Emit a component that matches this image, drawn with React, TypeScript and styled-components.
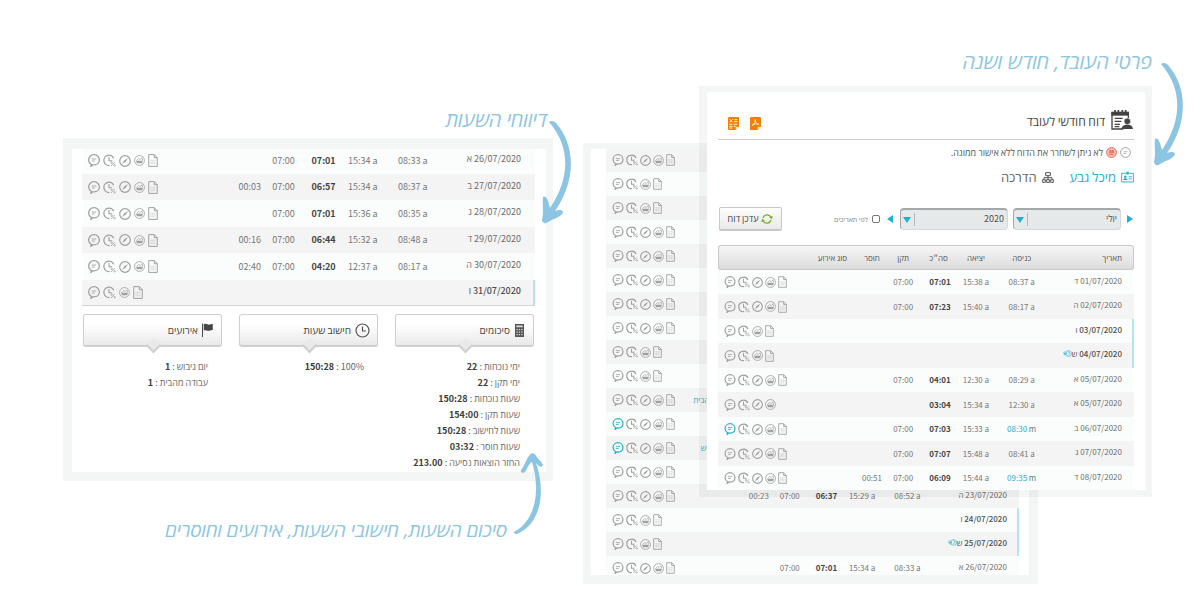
import React from "react";
import styled, { createGlobalStyle, css } from "styled-components";

const GlobalStyle = createGlobalStyle`
  * { box-sizing: border-box; }
  body {
    margin: 0;
    background: #fff;
    color: #666;
    font-family: "Noto Sans CJK JP", "Open Sans", sans-serif;
  }
`;

const CYAN = "#1fb0cf";
const SKY = "#8cc5e1";

/* ---------- page frame ---------- */

const Page = styled.main`
  display: grid;
  grid-template-columns: 490fr 569fr;
  column-gap: 30px;
  min-height: 600px;
  padding: 0 48px 0 63px;
  overflow: hidden;
`;

const Column = styled.section<{ $top: number }>`
  position: relative;
  min-width: 0;
  padding-top: ${(p) => p.$top}px;
`;

const Caption = styled.h2<{ $size?: number; $end?: number; $before?: number; $after?: number }>`
  margin: ${(p) => p.$before ?? 0}px ${(p) => p.$end ?? 0}px ${(p) => p.$after ?? 0}px 0;
  color: ${SKY};
  font: italic 400 ${(p) => p.$size ?? 20}px/24px "Open Sans", "DejaVu Sans", sans-serif;
  white-space: nowrap;
`;

const ArrowDown = styled.svg<{ $top: number; $right: number }>`
  position: absolute;
  z-index: 3;
  top: ${(p) => p.$top}px;
  right: ${(p) => p.$right}px;
  width: 32px;
  height: 108px;
`;

const ArrowUp = styled.svg`
  position: absolute;
  z-index: 3;
  top: 450px;
  right: 8px;
  width: 32px;
  height: 88px;
`;

const Stack = styled.div`
  display: grid;
  > * { grid-area: 1 / 1; }
`;

const panel = css`
  min-width: 0;
  border-style: solid;
  border-color: rgba(0, 40, 30, 0.043);
  background: #fff;
  background-clip: padding-box;
  overflow: hidden;
`;

const HoursPanel = styled.article`
  ${panel}
  border-width: 11px 7px 9px 9px;
  height: 343px;
  padding: 0 11px 0 10px;
`;

const BackPanel = styled.article`
  ${panel}
  align-self: start;
  height: 441px;
  margin: 57px 114px 0 0;
  border-width: 6px 9px 9px 8px;
  padding: 0 10px 0 15px;
`;

const FrontPanel = styled.article`
  ${panel}
  z-index: 1;
  align-self: start;
  margin-left: 116px;
  border-width: 6px 7px 7px 8px;
  padding: 0 11px;
`;

/* ---------- report table ---------- */

const Table = styled.table<{ $size: number; $pull?: number }>`
  width: 100%;
  margin-top: -${(p) => p.$pull ?? 0}px;
  border-collapse: separate;
  border-spacing: 0;
  table-layout: fixed;
  font-size: ${(p) => p.$size}px;
  line-height: 12px;
`;

const Col = styled.col<{ $w: number }>`
  width: ${(p) => p.$w}%;
`;

const HeadCell = styled.th<{ $place?: "first" | "last" }>`
  height: 25px;
  padding: 0;
  border: solid #c9c9c9;
  border-width: 1px 0;
  background: linear-gradient(#f6f6f6, #dcdcdc);
  color: #555;
  font-weight: 400;
  text-align: center;
  white-space: nowrap;
  ${(p) => p.$place === "first" && css`
    border-right-width: 1px;
    border-radius: 0 3px 3px 0;
    padding-right: 11px;
    text-align: right;
  `}
  ${(p) => p.$place === "last" && css`
    border-left-width: 1px;
    border-radius: 3px 0 0 3px;
  `}
`;

const Row = styled.tr<{ $h: number; $shade: boolean; $line?: boolean }>`
  height: ${(p) => p.$h}px;
  background: ${(p) => (p.$shade ? "#f4f4f4" : "#fbfdfd")};
  ${(p) => p.$line && css`
    td { border-bottom: 1px solid #d4d4d4; }
  `}
`;

const Cell = styled.td`
  padding: 0;
  text-align: center;
  white-space: nowrap;
  color: #777;
`;

const TotalCell = styled(Cell)`
  padding-left: 3px;
  color: #444;
  font-weight: 700;
`;

const EventCell = styled(Cell)`
  padding-right: 10px;
  color: ${CYAN};
`;

const DateCell = styled.td<{ $off?: boolean; $large?: boolean }>`
  padding: 0 ${(p) => (p.$large ? 14 : 12)}px 3px 0;
  text-align: right;
  white-space: nowrap;
  color: ${(p) => (p.$off ? "#4c4c4c" : "#6c6c6c")};
  box-shadow: ${(p) => (p.$off ? "inset -2px 0 0 #b2e5ee" : "none")};
  font-weight: ${(p) => (p.$off ? 500 : 400)};
`;

const IconCell = styled.td`
  padding: 0 0 0 6px;
  overflow: hidden;
`;

const Icons = styled.div<{ $gap: number }>`
  display: flex;
  direction: ltr;
  align-items: center;
  gap: ${(p) => p.$gap}px;
  color: #a0a0a0;
  svg { display: block; flex: none; }
`;

const Accent = styled.span`
  color: ${CYAN};
`;

/* ---------- row icons ---------- */

type Glyph = { w: number; h: number };

const Bubble = ({ w, h, on }: Glyph & { on?: boolean }) => (
  <svg width={w} height={h} viewBox="0 0 24 26" fill="none" stroke={on ? CYAN : "currentColor"} strokeWidth="2.6">
    <path d="M6.4 20.6C3.200 18.800 1.300 15.600 1.300 12 1.300 6 6 1.400 12 1.400S22.700 6 22.700 12 18 21.800 12 21.800c-1 0-2 0-2.800-.3L5.800 25z" />
    <path d="M7.500 10h9M7.500 14h6" strokeWidth="1.800" />
  </svg>
);

const ClockPercent = ({ w, h }: Glyph) => (
  <svg width={w} height={h} viewBox="0 0 26 26" fill="none" stroke="currentColor" strokeWidth="2.6">
    <path d="M21.500 8.500A10.300 10.300 0 1 0 13 23" />
    <path d="M12 6v7.500h6.500" strokeWidth="2.200" />
    <path d="M16 24l7.500-8" strokeWidth="1.600" />
    <circle cx="17.200" cy="17.500" r="1.500" strokeWidth="1.500" />
    <circle cx="23.200" cy="22.500" r="1.500" strokeWidth="1.500" />
  </svg>
);

const Compass = ({ w, h }: Glyph) => (
  <svg width={w} height={h} viewBox="0 0 24 24" fill="none" stroke="currentColor" strokeWidth="2.400">
    <circle cx="12" cy="12" r="10.600" />
    <path d="M18 6l-5 8-3-3zM6 18l5-8 3 3z" fill="currentColor" stroke="none" />
  </svg>
);

const Basket = ({ w, h }: Glyph) => (
  <svg width={w} height={h} viewBox="0 0 24 24" fill="none" stroke="currentColor" strokeWidth="1.800">
    <circle cx="12" cy="12" r="10.800" />
    <path d="M4.500 12.500h15l-2 5.500h-11z" fill="currentColor" stroke="none" />
    <path d="M5.500 12l5-4.500 3 2.500 4-4 1.500 6" strokeWidth="1.500" />
  </svg>
);

const Doc = ({ w, h }: Glyph) => (
  <svg width={w} height={h} viewBox="0 0 20 26" fill="none" stroke="currentColor" strokeWidth="2">
    <path d="M1.500 1.200h11l6 6v17.600h-17z" />
    <path d="M12.500 1.500v6h6" />
    <path d="M5 12.500h10M5 16h10M5 19.500h10" strokeWidth="1.200" opacity=".6" />
  </svg>
);

const Moon = () => (
  <svg width="9" height="7" viewBox="0 0 27 21" fill="none" stroke={CYAN} strokeWidth="2" aria-hidden="true">
    <circle cx="17" cy="10.500" r="8.500" />
    <path d="M16 5.500c5 0 6 8 0 9M12 10.500H3c-3-4 2-6 5-4M3 10.500c-1 4 3 5 6 3.500" />
  </svg>
);

type Entry = {
  date?: string;
  day?: string;
  in?: string;
  manual?: boolean;
  out?: string;
  total?: string;
  std?: string;
  lack?: string;
  event?: string;
  set?: "full" | "off" | "nodoc";
  marked?: boolean;
};

const e = (date: string, day: string, inn = "", out = "", total = "", std = "", lack = "", more: Partial<Entry> = {}): Entry => ({
  date, day, in: inn, out, total, std, lack, ...more,
});

const OFF: Partial<Entry> = { set: "off" };

const hoursRows: Entry[] = [
  e("26/07/2020", "א", "08:33", "15:34", "07:01", "07:00"),
  e("27/07/2020", "ב", "08:37", "15:34", "06:57", "07:00", "00:03"),
  e("28/07/2020", "ג", "08:35", "15:36", "07:01", "07:00"),
  e("29/07/2020", "ד", "08:48", "15:32", "06:44", "07:00", "00:16"),
  e("30/07/2020", "ה", "08:17", "12:37", "04:20", "07:00", "02:40"),
  e("31/07/2020", "ו", "", "", "", "", "", OFF),
];

const frontRows: Entry[] = [
  e("01/07/2020", "ד", "08:37", "15:38", "07:01", "07:00"),
  e("02/07/2020", "ה", "08:17", "15:40", "07:23", "07:00"),
  e("03/07/2020", "ו", "", "", "", "", "", OFF),
  e("04/07/2020", "ש", "", "", "", "", "", OFF),
  e("05/07/2020", "א", "08:29", "12:30", "04:01", "07:00"),
  e("05/07/2020", "א", "12:30", "15:34", "03:04", "", "", { set: "nodoc" }),
  e("06/07/2020", "ב", "08:30", "15:33", "07:03", "07:00", "", { manual: true, marked: true }),
  e("07/07/2020", "ג", "08:41", "15:48", "07:07", "07:00"),
  e("08/07/2020", "ד", "09:35", "15:44", "06:09", "07:00", "00:51", { manual: true }),
];

const backRows: Entry[] = [
  {}, OFF, OFF, {}, {}, {}, {}, {}, OFF, OFF,
  { event: "עבודה מהבית" },
  { marked: true },
  { marked: true, event: "יום גיבוש" },
  {},
  e("23/07/2020", "ה", "08:52", "15:29", "06:37", "07:00", "00:23"),
  e("24/07/2020", "ו", "", "", "", "", "", OFF),
  e("25/07/2020", "ש", "", "", "", "", "", OFF),
  e("26/07/2020", "א", "08:33", "15:34", "07:01", "07:00"),
];

const RowIcons = ({ entry, large }: { entry: Entry; large?: boolean }) => {
  const h = large ? 13 : 12;
  const s = large ? 12 : 11;
  return (
    <Icons $gap={large ? 3 : 2}>
      <Bubble w={12} h={h} on={entry.marked} />
      <ClockPercent w={large ? 13 : 12} h={h} />
      {entry.set !== "off" && <Compass w={s} h={s} />}
      <Basket w={11} h={11} />
      {entry.set !== "nodoc" && <Doc w={large ? 10 : 9} h={h} />}
    </Icons>
  );
};

const WIDTHS = [21, 12, 10, 8, 9, 6, 13, 21];
const HEADS = ["תאריך", "כניסה", "יציאה", "סה״כ", "תקן", "חוסר", "סוג אירוע", ""];

type ReportProps = {
  rows: Entry[];
  heights: [number, number];
  size: number;
  head?: boolean;
  large?: boolean;
  pull?: number;
  shadeOdd?: boolean;
  lastLine?: boolean;
};

const Report = ({ rows, heights, size, head, large, pull, shadeOdd, lastLine }: ReportProps) => (
  <Table $size={size} $pull={pull} dir="rtl">
    <colgroup>
      {WIDTHS.map((w, i) => <Col key={i} $w={w} />)}
    </colgroup>
    {head && (
      <thead>
        <tr>
          {HEADS.map((h, i) => (
            <HeadCell key={i} $place={i === 0 ? "first" : i === 7 ? "last" : undefined}>{h}</HeadCell>
          ))}
        </tr>
      </thead>
    )}
    <tbody>
      {rows.map((r, i) => (
        <Row key={i} $h={heights[i % 2]} $shade={(i % 2 === 0) === !!shadeOdd} $line={lastLine && i === rows.length - 1}>
          <DateCell $large={large} $off={!!r.date && r.set === "off"}>
            {r.date} {r.day}
            {r.day === "ש" && <Moon />}
          </DateCell>
          <Cell dir="ltr">
            {r.in && (r.manual ? <><Accent>{r.in}</Accent> m</> : `${r.in} a`)}
          </Cell>
          <Cell dir="ltr">{r.out && `${r.out} a`}</Cell>
          <TotalCell>{r.total}</TotalCell>
          <Cell>{r.std}</Cell>
          <Cell>{r.lack}</Cell>
          <EventCell>{r.event}</EventCell>
          <IconCell><RowIcons entry={r} large={large} /></IconCell>
        </Row>
      ))}
    </tbody>
  </Table>
);

/* ---------- summary cards ---------- */

const Cards = styled.div`
  display: grid;
  grid-template-columns: repeat(3, 1fr);
  column-gap: 17px;
  margin-top: 8px;
  padding: 0 1px;
  direction: rtl;
`;

const CardTitle = styled.h3`
  position: relative;
  display: flex;
  align-items: center;
  gap: 4px;
  height: 33px;
  margin: 0 0 12px;
  padding: 0 7px;
  border: 1px solid #cfcfcf;
  border-bottom-width: 2px;
  border-radius: 3px;
  background: linear-gradient(#fff 30%, #e9e9e9);
  color: #444;
  font-size: 10px;
  line-height: 14px;
  font-weight: 400;
  white-space: nowrap;
  &::after {
    content: "";
    position: absolute;
    left: 50%;
    bottom: -6px;
    width: 9px;
    height: 9px;
    margin-left: -5px;
    border: solid #cfcfcf;
    border-width: 0 2px 2px 0;
    background: #e9e9e9;
    transform: rotate(45deg);
  }
`;

const Lines = styled.ul`
  margin: 0;
  padding: 0 14px 0 0;
  list-style: none;
  color: #666;
  font-size: 9px;
  line-height: 16px;
  white-space: nowrap;
  strong { color: #3c3c3c; }
`;

const CalcIcon = () => (
  <svg width="12" height="13" viewBox="0 0 24 26" fill="#555">
    <path d="M2 0h18v26H2z" />
    <path d="M4.500 3h13v3.500h-13zM5 10h2.500v2.500H5zM9.700 10h2.500v2.500H9.700zM14.500 10h2.500v2.500h-2.500zM5 15h2.500v2.500H5zM9.700 15h2.500v2.500H9.700zM14.500 15h2.500v2.500h-2.500zM5 20h2.500v2.500H5zM9.700 20h2.500v2.500H9.700zM14.500 20h2.500v2.500h-2.500z" fill="#ddd" />
  </svg>
);

const ClockIcon = () => (
  <svg width="15" height="15" viewBox="0 0 30 30" fill="none" stroke="#555" strokeWidth="2.400">
    <circle cx="15" cy="15" r="13" />
    <path d="M15 7v9h7" />
  </svg>
);

const FlagIcon = () => (
  <svg width="12" height="14" viewBox="0 0 24 28" fill="#444">
    <path d="M0 1h2v27H0zM3.500 2.500c5-3 8 2 12 .5 2-.7 4-1.500 6-1v12c-4-1-6 2-9.500 1.500-3-.5-5-2-8.500-.5z" />
  </svg>
);

const cards: { title: string; icon: React.ReactNode; lines: [string, string][] }[] = [
  {
    title: "סיכומים",
    icon: <CalcIcon />,
    lines: [
      ["ימי נוכחות", "22"],
      ["ימי תקן", "22"],
      ["שעות נוכחות", "150:28"],
      ["שעות תקן", "154:00"],
      ["שעות לחישוב", "150:28"],
      ["שעות חוסר", "03:32"],
      ["החזר הוצאות נסיעה", "213.00"],
    ],
  },
  { title: "חישוב שעות", icon: <ClockIcon />, lines: [["100%", "150:28"]] },
  { title: "אירועים", icon: <FlagIcon />, lines: [["יום גיבוש", "1"], ["עבודה מהבית", "1"]] },
];

/* ---------- report header ---------- */

const TitleBar = styled.header`
  display: flex;
  align-items: center;
  height: 48px;
  padding: 10px 1px 0 0;
  border-bottom: 1px solid #cdcdcd;
  direction: rtl;
`;

const Title = styled.h1`
  margin: 0 6px 0 auto;
  color: #444;
  font-size: 12px;
  line-height: 16px;
  font-weight: 400;
`;

const Exports = styled.div`
  display: flex;
  gap: 11px;
  margin: 5px auto 0 10px;
`;

const IconButton = styled.button`
  display: block;
  padding: 0;
  border: 0;
  background: none;
  svg { display: block; }
`;

const Notice = styled.p`
  display: flex;
  align-items: center;
  gap: 3px;
  height: 25px;
  margin: 0;
  padding-right: 3px;
  direction: rtl;
  color: #555;
  font-size: 9px;
  line-height: 12px;
  white-space: nowrap;
`;

const Person = styled.div`
  display: flex;
  align-items: center;
  gap: 5px;
  height: 24px;
  direction: rtl;
  font-size: 13px;
  line-height: 18px;
  color: #666;
`;

const PersonName = styled.a`
  margin-left: 11px;
  color: ${CYAN};
  text-decoration: none;
`;

const Filters = styled.form`
  display: flex;
  align-items: center;
  height: 24px;
  margin: 18px 0 14px;
  direction: rtl;
`;

const SelectBox = styled.div`
  position: relative;
  flex: 0 1 108px;
  min-width: 0;
  margin-left: 5px;
  &::after {
    content: "";
    position: absolute;
    left: 3px;
    top: 9px;
    border: solid transparent;
    border-width: 6px 4px 0;
    border-top-color: ${CYAN};
  }
  &::before {
    content: "";
    position: absolute;
    left: 14px;
    top: 5px;
    height: 13px;
    border-left: 1px solid #b5b9b9;
  }
`;

const Select = styled.select`
  display: block;
  width: 100%;
  height: 22px;
  padding: 0 3px 2px 18px;
  appearance: none;
  border: 1px solid #d3d8d8;
  border-top: 2px solid #a3a8a8;
  border-left-color: #a3a8a8;
  border-radius: 4px;
  background: #e5e9e9;
  color: #555;
  font: 9px/12px "Noto Sans CJK JP", "Open Sans", sans-serif;
`;

const Step = styled.button<{ $prev?: boolean }>`
  width: 0;
  height: 0;
  padding: 0;
  border: solid transparent;
  background: none;
  ${(p) => p.$prev
    ? css`border-width: 4px 0 4px 6px; border-left-color: ${CYAN}; margin: 0 1px 0 6px;`
    : css`border-width: 4px 6px 4px 0; border-right-color: ${CYAN}; margin: 0 2px 0 5px;`}
`;

const Check = styled.label`
  display: flex;
  align-items: center;
  gap: 4px;
  color: #888;
  margin-right: 2px;
  font-size: 7px;
  line-height: 12px;
  white-space: nowrap;
  input {
    width: 8px;
    height: 8px;
    margin: 0;
    appearance: none;
    border: 1px solid #777;
    border-radius: 2px;
    background: #fff;
  }
`;

const Update = styled.button`
  display: flex;
  align-items: center;
  justify-content: center;
  gap: 3px;
  flex: 0 0 63px;
  height: 24px;
  margin: 0 auto 0 1px;
  padding: 0;
  border: 1px solid #c8c8c8;
  border-bottom-width: 2px;
  border-radius: 2px;
  background: linear-gradient(#fdfdfd, #e9e9e9);
  color: #444;
  font: 9px/12px "Noto Sans CJK JP", "Open Sans", sans-serif;
  white-space: nowrap;
`;

const ReportIcon = () => (
  <svg width="22" height="21" viewBox="0 0 66 63" fill="none" stroke="#444" strokeWidth="4">
    <path d="M52 26V9H3v48h34" />
    <path d="M1 5h53v12H1z" fill="#444" stroke="none" />
    <path d="M12 0v10M22 0v10M34 0v10M44 0v10" strokeWidth="5" />
    <path d="M11 25h24M11 34h20M11 43h16M11 50h14" strokeWidth="3.500" />
    <circle cx="49" cy="34" r="10" fill="#444" stroke="#fff" strokeWidth="2" />
    <path d="M31 57c1-9 7-12 13-13h10c6 1 11 4 12 13z" fill="#444" stroke="none" />
  </svg>
);

const ExcelIcon = () => (
  <svg width="11" height="13" viewBox="0 0 33 39">
    <path d="M2 0h29l2 2v26L23 39H2l-2-2V2z" fill="#ee8200" />
    <path d="M5 7l9 9M14 7l-9 9M19 8h9M19 14h9M4 22h9M17 22h11M4 28h9M17 28h6M4 33h9" stroke="#fff" strokeWidth="2.600" />
    <path d="M23 39V29h10z" fill="#fbdcb4" />
  </svg>
);

const PdfIcon = () => (
  <svg width="11" height="13" viewBox="0 0 33 39">
    <path d="M2 0h29l2 2v26L23 39H2l-2-2V2z" fill="#ee8200" />
    <path d="M15 8c4 0 0 12-9 18 3-5 14-7 21-4-6 1-12-6-12-14z" fill="none" stroke="#fff" strokeWidth="2.200" />
    <path d="M23 39V29h10z" fill="#fbdcb4" />
  </svg>
);

const StatusIcon = ({ red }: { red?: boolean }) => (
  <svg width="11" height="11" viewBox="0 0 22 22" fill={red ? "#f9c4bd" : "none"} stroke={red ? "#e25a4c" : "#999"} strokeWidth="1.800">
    <circle cx="11" cy="11" r="9.800" />
    {red
      ? <path d="M6 8h10M5.500 11.500h11M7 15h8M8.500 6v5M13.500 6v5" />
      : <path d="M7 9.500h8M7 13h5" strokeWidth="1.400" />}
  </svg>
);

const BadgeIcon = () => (
  <svg width="13" height="12" viewBox="0 0 42 36" fill="none" stroke={CYAN} strokeWidth="3">
    <path d="M16 6H2v28h38V6H26" />
    <path d="M17 1h8v9h-8z" fill={CYAN} stroke="none" />
    <circle cx="14" cy="17" r="4" fill={CYAN} stroke="none" />
    <path d="M7 28c0-8 14-8 14 0z" fill={CYAN} stroke="none" />
    <path d="M25 17h10M25 24h10" />
  </svg>
);

const OrgIcon = () => (
  <svg width="12" height="11" viewBox="0 0 36 33" fill="none" stroke="#555" strokeWidth="3">
    <path d="M11 2h14v9H11zM2 23h8v8H2zM14 23h8v8h-8zM26 23h8v8h-8zM18 11v12M6 23v-6h24v6" />
  </svg>
);

const RefreshIcon = () => (
  <svg width="12" height="12" viewBox="0 0 36 36" fill="none" stroke="#7aab2e" strokeWidth="4">
    <path d="M6 15C9 5 22 2 29 11M30 21c-3 10-16 13-23 4" />
    <path d="M35 8l-2 11-9-6zM1 28l2-11 9 6z" fill="#7aab2e" stroke="none" />
  </svg>
);

const downArrow = (
  <path
    d="M7 4C9 2 12 3 14 5C33 26 35 62 13 93C16 92 20 91 21 94C20 99 12 100 6 104C3 107 0 104 0 102C2 94 0 86 1 79C4 77 6 82 8 90C28 60 29 29 7 4Z"
    fill={SKY}
  />
);

export default function App() {
  return (
    <>
      <GlobalStyle />
      <Page>
        <Column $top={108}>
          <Caption dir="rtl" $end={6} $after={6}>דיווחי השעות</Caption>
          <ArrowDown $top={118} $right={-21} viewBox="0 0 32 108" aria-hidden="true">{downArrow}</ArrowDown>
          <HoursPanel>
            <Report rows={hoursRows} heights={[27, 26]} size={9} large pull={2} lastLine />
            <Cards>
              {cards.map((c) => (
                <section key={c.title}>
                  <CardTitle>{c.icon}{c.title}</CardTitle>
                  <Lines>
                    {c.lines.map(([k, v]) => (
                      <li key={k}>{k} : <strong>{v}</strong></li>
                    ))}
                  </Lines>
                </section>
              ))}
            </Cards>
          </HoursPanel>
          <ArrowUp viewBox="0 0 32 88" aria-hidden="true">
            <path
              d="M1 82C22 71 28 42 19 12C15 14 14 20 12 22C9 24 7 22 8 20C12 15 13 9 16 6C18 2 22 3 23 6C25 9 28 11 30 15C29 18 26 17 23 13C34 45 26 75 4 84C2 84 0 83 1 82Z"
              fill={SKY}
            />
          </ArrowUp>
          <Caption dir="rtl" $size={19} $end={46} $before={37}>סיכום השעות, חישובי השעות, אירועים וחוסרים</Caption>
        </Column>

        <Column $top={50}>
          <Caption dir="rtl" $after={12}>פרטי העובד, חודש ושנה</Caption>
          <ArrowDown $top={60} $right={-34} viewBox="0 0 32 108" aria-hidden="true">{downArrow}</ArrowDown>
          <Stack>
            <BackPanel>
              <Report rows={backRows} heights={[24, 24]} size={8} pull={1} shadeOdd />
            </BackPanel>
            <FrontPanel>
              <TitleBar>
                <ReportIcon />
                <Title>דוח חודשי לעובד</Title>
                <Exports>
                  <IconButton type="button" aria-label="PDF"><PdfIcon /></IconButton>
                  <IconButton type="button" aria-label="Excel"><ExcelIcon /></IconButton>
                </Exports>
              </TitleBar>
              <Notice>
                <StatusIcon />
                <StatusIcon red />
                לא ניתן לשחרר את הדוח ללא אישור ממונה.
              </Notice>
              <Person>
                <BadgeIcon />
                <PersonName href="#employee">מיכל גבע</PersonName>
                <OrgIcon />
                <span>הדרכה</span>
              </Person>
              <Filters>
                <Step type="button" aria-label="החודש הקודם" $prev />
                <SelectBox>
                  <Select aria-label="חודש" defaultValue="7"><option value="7">יולי</option></Select>
                </SelectBox>
                <SelectBox>
                  <Select aria-label="שנה" defaultValue="2020"><option>2020</option></Select>
                </SelectBox>
                <Step type="button" aria-label="החודש הבא" />
                <Check><input type="checkbox" />לפי תאריכים</Check>
                <Update type="button"><RefreshIcon />עדכן דוח</Update>
              </Filters>
              <Report rows={frontRows} heights={[24, 25]} size={8} head />
            </FrontPanel>
          </Stack>
        </Column>
      </Page>
    </>
  );
}
